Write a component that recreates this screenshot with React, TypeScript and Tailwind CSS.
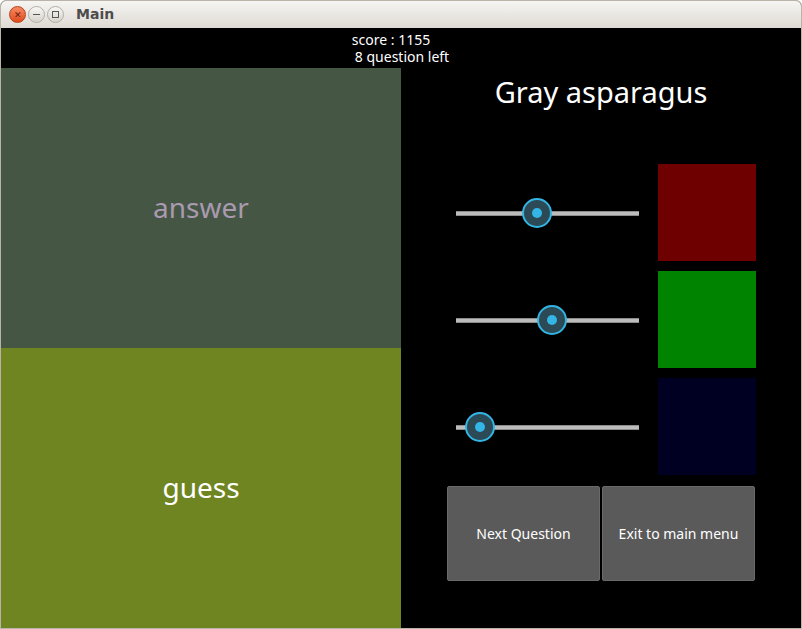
const font = { fontFamily: '"Noto Sans", "Open Sans", sans-serif' };

function Slider({ pos }: { pos: number }) {
  return (
    <div className="relative w-[183px] h-[30px] flex items-center">
      <div className="w-full h-[5px] mt-[1px] bg-[#bcbcbc] border-y border-[#8c8c8c]" />
      {/* handle */}
      <div
        className="absolute top-0 w-[30px] h-[30px] -ml-[15px] rounded-full border-2 border-[#33b5e5] bg-[#2b4a55] flex items-center justify-center"
        style={{ left: pos }}
      >
        <div className="w-[10px] h-[10px] rounded-full bg-[#33b5e5]" />
      </div>
    </div>
  );
}

function Row({ pos, color }: { pos: number; color: string }) {
  return (
    <div className="flex items-center h-[97px]">
      <div className="pl-[55px] w-[257px]">
        <Slider pos={pos} />
      </div>
      <div className={`w-[98px] h-[97px] ${color}`} />
    </div>
  );
}

export default function App() {
  return (
    <div
      className="w-[802px] h-[629px] flex flex-col bg-[#3c3b37] border border-[#b9b3a8] rounded-t-[6px] overflow-hidden"
      style={font}
    >
      {/* title bar */}
      <div className="h-[27px] flex items-center bg-gradient-to-b from-[#f6f5f3] to-[#dedad3] px-[8px] gap-[2px] shrink-0">
        <div className="w-[17px] h-[17px] rounded-full bg-gradient-to-b from-[#f78963] to-[#df4a18] border border-[#b64216] flex items-center justify-center text-[#6a2008] text-[9px] leading-none">
          ✕
        </div>
        <div className="w-[17px] h-[17px] rounded-full bg-gradient-to-b from-[#f8f7f5] to-[#d6d3cd] border border-[#b2aea6] flex items-center justify-center">
          <div className="w-[7px] h-[1px] bg-[#5a5753]" />
        </div>
        <div className="w-[17px] h-[17px] rounded-full bg-gradient-to-b from-[#f8f7f5] to-[#d6d3cd] border border-[#b2aea6] flex items-center justify-center">
          <div className="w-[7px] h-[7px] border border-[#5a5753]" />
        </div>
        <span
          className="ml-[10px] text-[14px] font-bold text-[#4c4c4c]"
          style={{ fontFamily: '"DejaVu Sans", sans-serif' }}
        >
          Main
        </span>
      </div>

      {/* score header */}
      <div className="h-[40px] bg-black flex flex-col items-center justify-center text-white text-[14px] leading-[17px] shrink-0">
        <div className="-ml-[20px]">score : 1155</div>
        <div className="ml-[2px]">8 question left</div>
      </div>

      <div className="flex flex-1">
        {/* left side */}
        <div className="w-[400px] flex flex-col">
          <div className="h-[280px] bg-[#455744] flex items-center justify-center pb-[2px] text-[28px] text-[#a99ab0]">
            answer
          </div>
          <div className="h-[280px] bg-[#6f8522] flex items-center justify-center pb-[2px] text-[28px] text-white">
            guess
          </div>
        </div>

        {/* right side */}
        <div className="w-[400px] bg-black flex flex-col">
          <div className="h-[48px] flex items-center justify-center text-white text-[29px]">
            Gray asparagus
          </div>
          <div className="mt-[48px] flex flex-col gap-[10px]">
            <Row pos={81} color="bg-[#6e0000]" />
            <Row pos={96} color="bg-[#008400]" />
            <Row pos={24} color="bg-[#000022]" />
          </div>
          <div className="mt-[11px] pl-[46px] flex gap-[2px]">
            <button className="w-[153px] h-[95px] bg-[#5a5a5a] border border-[#6a6a6a] rounded-[2px] text-white text-[14px]">
              Next Question
            </button>
            <button className="w-[153px] h-[95px] bg-[#5a5a5a] border border-[#6a6a6a] rounded-[2px] text-white text-[14px]">
              Exit to main menu
            </button>
          </div>
        </div>
      </div>
    </div>
  );
}
